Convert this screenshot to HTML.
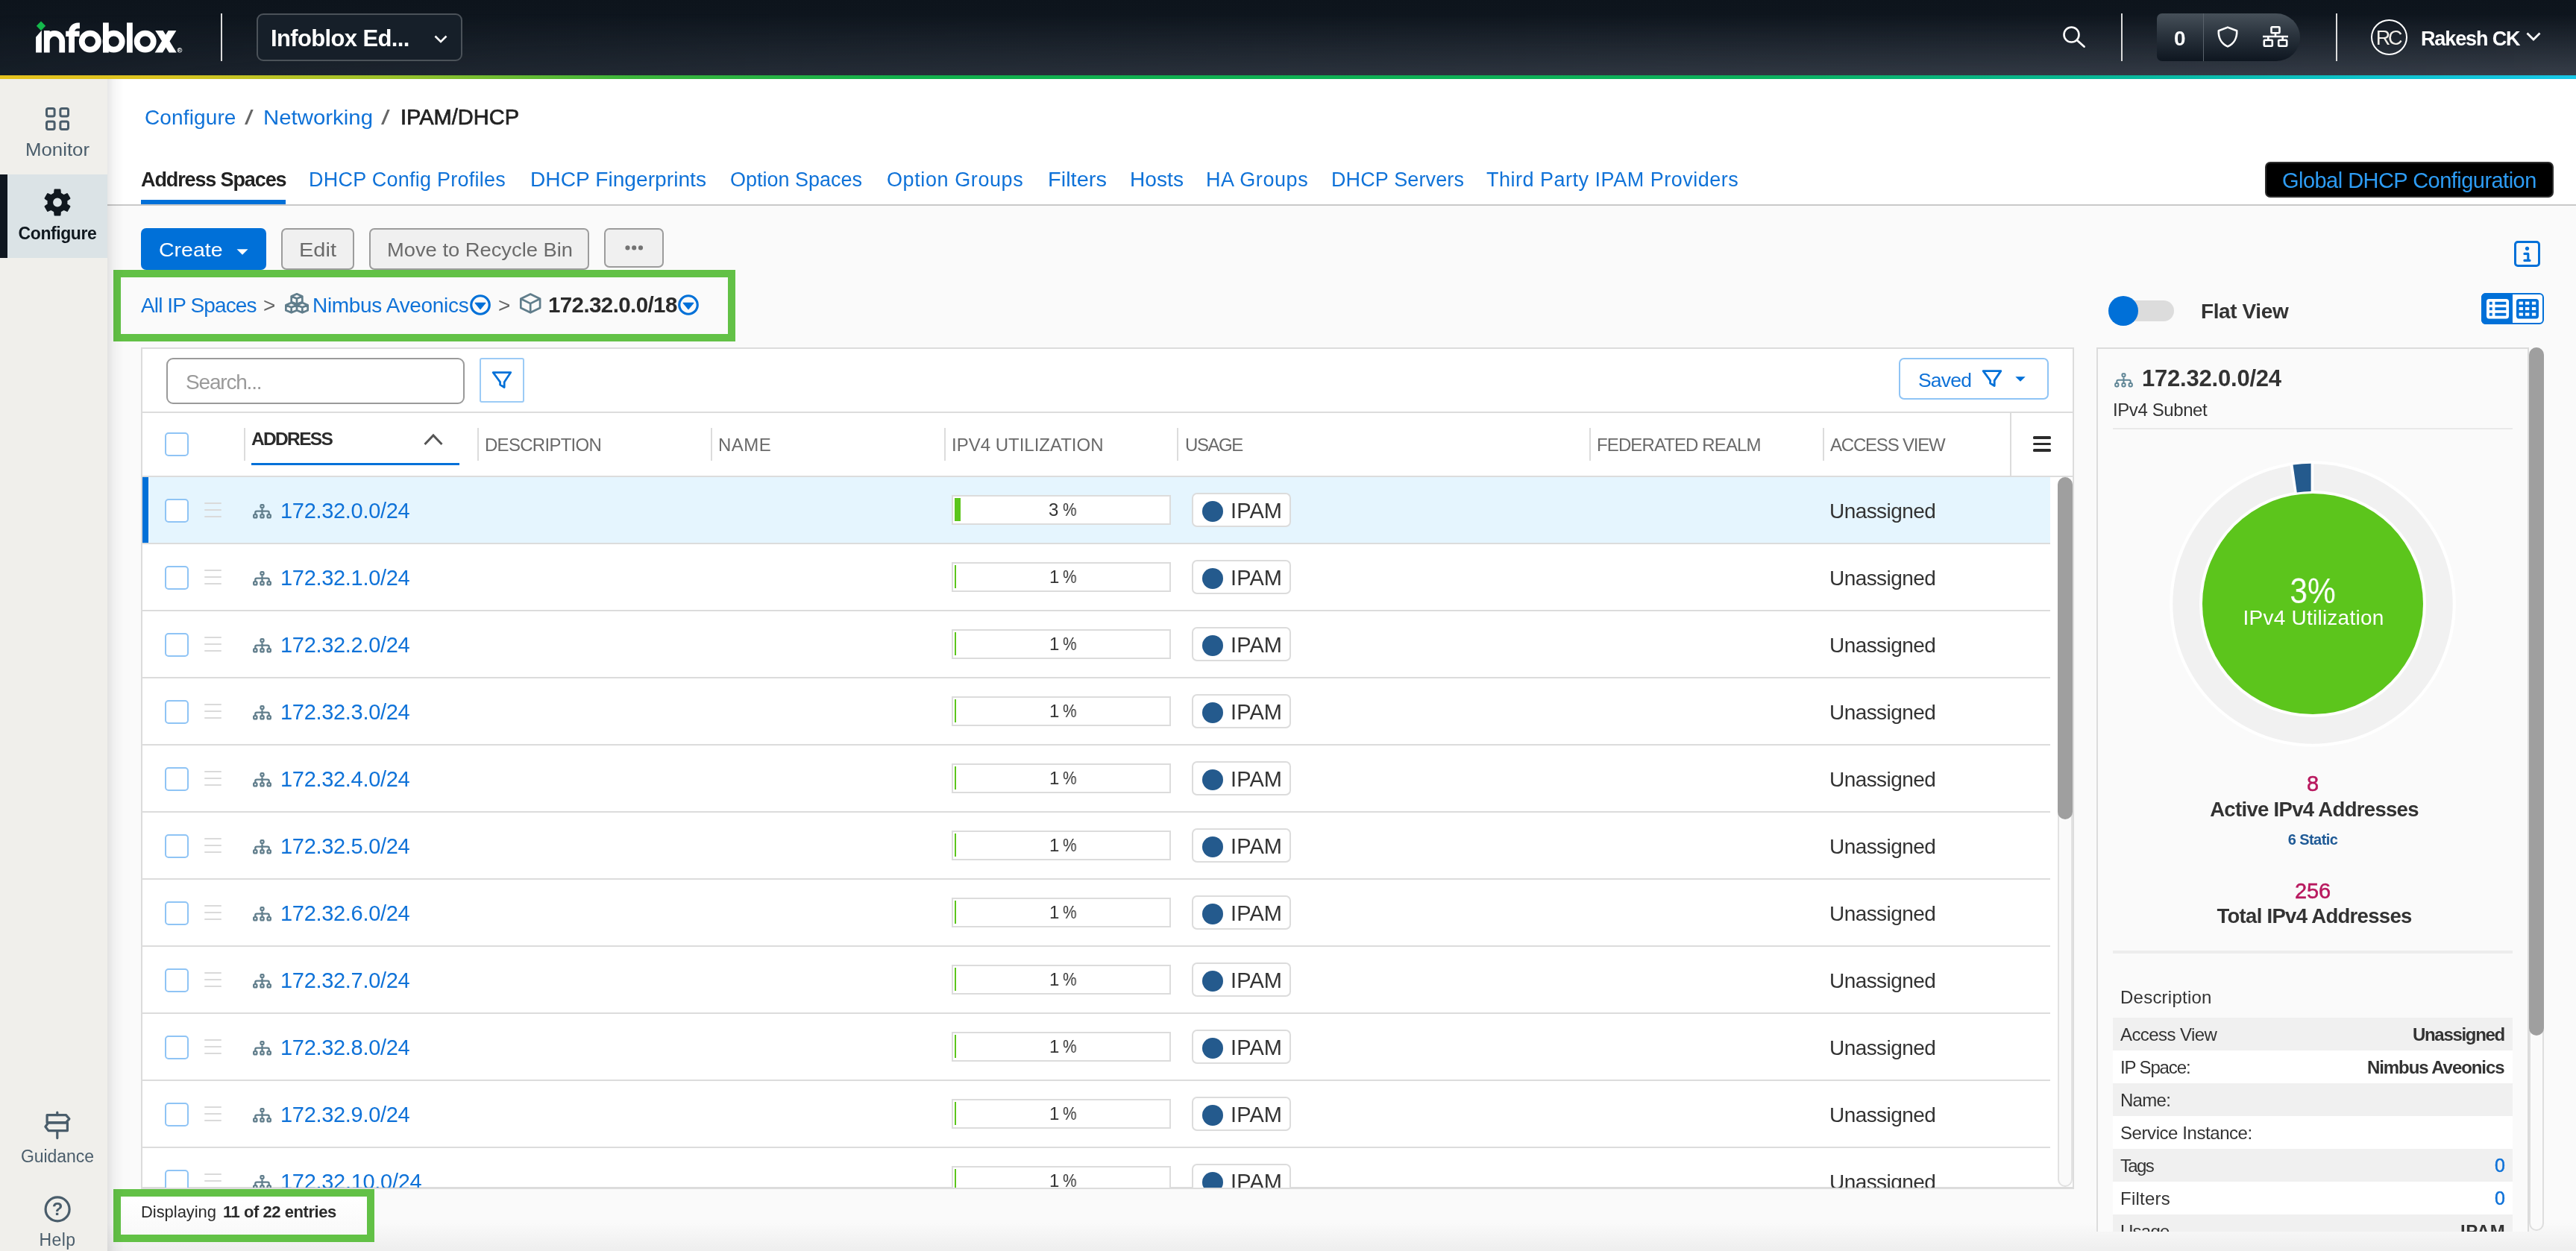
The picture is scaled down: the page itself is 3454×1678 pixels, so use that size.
<!DOCTYPE html>
<html><head><meta charset="utf-8"><title>IPAM/DHCP</title><style>
html,body{margin:0;padding:0;}
body{width:3454px;height:1678px;overflow:hidden;position:relative;background:#fafafa;font-family:"Liberation Sans",sans-serif;}
div,span.t,svg{position:absolute;box-sizing:border-box;}
span.t{white-space:pre;will-change:transform;}
svg{overflow:visible;}
</style></head><body>
<div style="left:144px;top:106px;width:3310px;height:169px;background:#fff;"></div>
<div style="left:144px;top:274px;width:3310px;height:2px;background:#c9c9c9;"></div>
<div style="left:0px;top:0px;width:3454px;height:102px;background:linear-gradient(#0d141c,#121a23);"></div>
<div style="left:0px;top:0px;width:3454px;height:102px;background:linear-gradient(to bottom,rgba(75,82,94,0) 18%,rgba(75,82,94,0.64) 100%);-webkit-mask-image:linear-gradient(to right,rgba(0,0,0,0.12) 0%,rgba(0,0,0,0.5) 30%,rgba(0,0,0,0.8) 65%,#000 100%);mask-image:linear-gradient(to right,rgba(0,0,0,0.12) 0%,rgba(0,0,0,0.5) 30%,rgba(0,0,0,0.8) 65%,#000 100%);"></div>
<div style="left:0px;top:101px;width:3454px;height:5px;background:linear-gradient(90deg,#e6c21e 0%,#dcc420 6%,#9cc22a 15%,#3fb53a 24%,#12b04c 35%,#0cb05c 68%,#08b794 81%,#0ec3cc 92%,#18c8e8 100%);"></div>
<svg style="left:0px;top:0px;" width="260" height="100" viewBox="0 0 260 100"><polygon points="48.1,70.6 48.1,49.8 55.9,40.7 55.9,70.6" fill="#fff"/><polygon points="55,28.6 61.2,34.8 55,41 48.8,34.8" fill="#14b84b"/><path d="M62.8 70.6 V40.9 M62.8 55.1 A10.2 10.2 0 0 1 83.2 55.1 V70.6" stroke="#fff" stroke-width="7.8" fill="none"/><path d="M96.1 70.6 V42.6 A8.3 8.3 0 0 1 104.4 34.3 H106.9" stroke="#fff" stroke-width="7.8" fill="none"/><rect x="88.2" y="41.7" width="18.4" height="7.3" fill="#fff"/><circle cx="120.8" cy="55.65" r="11.05" stroke="#fff" stroke-width="7.8" fill="none"/><path d="M141.9 30.4 V70.6" stroke="#fff" stroke-width="7.8" fill="none"/><circle cx="152.6" cy="55.65" r="11.05" stroke="#fff" stroke-width="7.8" fill="none"/><path d="M173.9 30.4 V70.6" stroke="#fff" stroke-width="7.8" fill="none"/><circle cx="194.7" cy="55.65" r="11.05" stroke="#fff" stroke-width="7.8" fill="none"/><polygon points="208.2,40.9 218.6,40.9 236.7,70.6 226.8,70.6" fill="#fff"/><polygon points="225.6,40.9 236.4,40.9 218.1,70.6 207.6,70.6" fill="#fff"/><circle cx="241" cy="67.3" r="2.9" fill="none" stroke="#fff" stroke-width="0.8"/></svg>
<span id="t1" class="t" style="top:66.00px;font-size:4.5px;line-height:4.5px;color:#fff;font-weight:700;letter-spacing:0.000px;left:239.4px;">R</span>
<div style="left:296px;top:18px;width:2px;height:64px;background:#dcdcdc;"></div>
<div style="left:344px;top:18px;width:276px;height:64px;border:2px solid #4b5259;border-radius:9px;background:#161f29;"></div>
<span id="t2" class="t" style="top:36.00px;font-size:31px;line-height:31px;color:#fff;font-weight:700;letter-spacing:-0.638px;left:363px;">Infoblox Ed...</span>
<svg style="left:582px;top:47px;" width="18" height="11" viewBox="0 0 18 11"><path d="M1.5 1.5 L9 9 L16.5 1.5" fill="none" stroke="#fff" stroke-width="2.6"/></svg>
<svg style="left:2766px;top:35px;" width="30" height="29" viewBox="0 0 30 29"><circle cx="11.5" cy="11.5" r="10" fill="none" stroke="#fff" stroke-width="2.6"/><path d="M19 19 L28.5 27.5" stroke="#fff" stroke-width="2.8" stroke-linecap="round"/></svg>
<div style="left:2844px;top:18px;width:2px;height:64px;background:#dcdcdc;"></div>
<div style="left:2892px;top:18px;width:192px;height:64px;border-radius:7px 32px 32px 7px;background:linear-gradient(#465059,#2a333d 45%,#0e1620);"></div>
<div style="left:2954px;top:18px;width:1px;height:64px;background:#59626b;"></div>
<span id="t3" class="t" style="top:38.00px;font-size:28px;line-height:28px;color:#fff;font-weight:700;letter-spacing:0.000px;left:2914.5px;">0</span>
<svg style="left:2973px;top:35px;" width="28" height="29" viewBox="0 0 28 29"><path d="M14 1.6 L26.2 6.2 C26.6 15 23 23.5 14 27.4 C5 23.5 1.4 15 1.8 6.2 Z" fill="none" stroke="#fff" stroke-width="2.6" stroke-linejoin="round"/></svg>
<svg style="left:3034px;top:35px;" width="34" height="28" viewBox="0 0 34 28"><g fill="none" stroke="#fff" stroke-width="2.6" stroke-linejoin="round"><rect x="11.5" y="1.3" width="11" height="8" rx="1"/><rect x="1.8" y="18.7" width="11" height="8" rx="1"/><rect x="21.2" y="18.7" width="11" height="8" rx="1"/><path d="M0 14 H34 M17 9.3 V14 M7.3 14 V18.7 M26.7 14 V18.7"/></g></svg>
<div style="left:3132px;top:18px;width:2px;height:64px;background:#dcdcdc;"></div>
<div style="left:3179px;top:26px;width:49px;height:48px;border:2px solid #fff;border-radius:50%;"></div>
<span id="t4" class="t" style="top:38.00px;font-size:27px;line-height:27px;color:#f1eee8;font-weight:400;letter-spacing:-3.333px;left:3201.83px;transform:translateX(-50%);">RC</span>
<span id="t5" class="t" style="top:39.00px;font-size:27px;line-height:27px;color:#fff;font-weight:700;letter-spacing:-1.125px;left:3246px;">Rakesh CK</span>
<svg style="left:3387px;top:43px;" width="20" height="12" viewBox="0 0 20 12"><path d="M1.5 1.5 L10 10 L18.5 1.5" fill="none" stroke="#fff" stroke-width="2.8"/></svg>
<div style="left:0px;top:106px;width:144px;height:1572px;background:#f0efeb;"></div>
<svg style="left:61px;top:144px;" width="32" height="31" viewBox="0 0 32 31"><g fill="none" stroke="#4a5d6b" stroke-width="3"><rect x="1.5" y="1.5" width="10.6" height="10.4" rx="2.2"/><rect x="19.9" y="1.5" width="10.6" height="10.4" rx="2.2"/><rect x="1.5" y="19.1" width="10.6" height="10.4" rx="2.2"/><rect x="19.9" y="19.1" width="10.6" height="10.4" rx="2.2"/></g></svg>
<span id="t6" class="t" style="top:190.00px;font-size:23px;line-height:23px;color:#4a5d6b;font-weight:400;letter-spacing:0.000px;left:77.00px;transform:translateX(-50%) scaleX(1.1212);">Monitor</span>
<div style="left:0px;top:234px;width:144px;height:112px;background:#dbe3e6;"></div>
<div style="left:0px;top:234px;width:10px;height:112px;background:#0f1720;"></div>
<svg style="left:59px;top:253px;" width="36" height="37" viewBox="0 0 36 37"><path d="M14.11 6.52 L14.60 1.64 L21.40 1.64 L21.89 6.52 L26.43 9.14 L30.90 7.13 L34.30 13.01 L30.32 15.88 L30.32 21.12 L34.30 23.99 L30.90 29.87 L26.43 27.86 L21.89 30.48 L21.40 35.36 L14.60 35.36 L14.11 30.48 L9.57 27.86 L5.10 29.87 L1.70 23.99 L5.68 21.12 L5.68 15.88 L1.70 13.01 L5.10 7.13 L9.57 9.14 Z M25.00 18.50 A7.0 7.0 0 1 0 11.00 18.50 A7.0 7.0 0 1 0 25.00 18.50 Z" fill="#10181f" fill-rule="evenodd" stroke="#10181f" stroke-width="2.2" stroke-linejoin="round"/></svg>
<span id="t7" class="t" style="top:302.00px;font-size:23px;line-height:23px;color:#10181f;font-weight:700;letter-spacing:-0.425px;left:76.79px;transform:translateX(-50%);">Configure</span>
<svg style="left:58px;top:1491px;" width="37" height="37" viewBox="0 0 37 37"><g fill="none" stroke="#4a5d6b" stroke-width="3.2" stroke-linejoin="round" stroke-linecap="round"><path d="M18.8 1 V4.6 M18.8 25.6 V35.6"/><path d="M5.1 4.6 H30.5 L34.9 9.7 L30.5 14.8 H5.1 Z"/><path d="M32.4 14.8 H7 L2.9 20.2 L7 25.6 H32.4 Z"/></g></svg>
<span id="t8" class="t" style="top:1540.00px;font-size:23px;line-height:23px;color:#4a5d6b;font-weight:400;letter-spacing:-0.062px;left:76.97px;transform:translateX(-50%);">Guidance</span>
<svg style="left:59px;top:1603.5px;" width="36" height="36" viewBox="0 0 36 36"><circle cx="18.1" cy="17.9" r="16" fill="none" stroke="#4a5d6b" stroke-width="3.2"/></svg>
<span id="t9" class="t" style="top:1610.00px;font-size:24px;line-height:24px;color:#4a5d6b;font-weight:700;letter-spacing:0.000px;left:77.00px;transform:translateX(-50%);">?</span>
<span id="t10" class="t" style="top:1652.00px;font-size:23px;line-height:23px;color:#4a5d6b;font-weight:400;letter-spacing:0.482px;left:77.24px;transform:translateX(-50%);">Help</span>
<span id="t11" class="t" style="top:144.00px;font-size:28px;line-height:28px;color:#0f72d8;font-weight:400;letter-spacing:0.129px;left:194px;">Configure</span>
<span id="t12" class="t" style="top:144.00px;font-size:28px;line-height:28px;color:#666;font-weight:400;letter-spacing:0.000px;left:327.5px;transform:scaleX(1.5);transform-origin:left;">/</span>
<span id="t13" class="t" style="top:144.00px;font-size:28px;line-height:28px;color:#0f72d8;font-weight:400;letter-spacing:0.000px;left:353px;transform:scaleX(1.0495);transform-origin:left center;">Networking</span>
<span id="t14" class="t" style="top:144.00px;font-size:28px;line-height:28px;color:#666;font-weight:400;letter-spacing:0.000px;left:511px;transform:scaleX(1.5);transform-origin:left;">/</span>
<span id="t15" class="t" style="top:143.00px;font-size:29px;line-height:29px;color:#222;font-weight:400;letter-spacing:0.002px;-webkit-text-stroke:0.7px #222;left:536.5px;">IPAM/DHCP</span>
<span id="t16" class="t" style="top:228.00px;font-size:27px;line-height:27px;color:#222;font-weight:700;letter-spacing:-1.119px;left:188.5px;">Address Spaces</span>
<div style="left:189px;top:268px;width:194px;height:6px;background:#0070d8;"></div>
<span id="t17" class="t" style="top:228.00px;font-size:27px;line-height:27px;color:#0f72d8;font-weight:400;letter-spacing:0.251px;left:413.5px;">DHCP Config Profiles</span>
<span id="t18" class="t" style="top:228.00px;font-size:27px;line-height:27px;color:#0f72d8;font-weight:400;letter-spacing:0.000px;left:710.5px;transform:scaleX(1.0439);transform-origin:left center;">DHCP Fingerprints</span>
<span id="t19" class="t" style="top:228.00px;font-size:27px;line-height:27px;color:#0f72d8;font-weight:400;letter-spacing:-0.009px;left:978.5px;">Option Spaces</span>
<span id="t20" class="t" style="top:228.00px;font-size:27px;line-height:27px;color:#0f72d8;font-weight:400;letter-spacing:0.593px;left:1188.5px;">Option Groups</span>
<span id="t21" class="t" style="top:228.00px;font-size:27px;line-height:27px;color:#0f72d8;font-weight:400;letter-spacing:0.000px;left:1404.5px;transform:scaleX(1.0748);transform-origin:left center;">Filters</span>
<span id="t22" class="t" style="top:228.00px;font-size:27px;line-height:27px;color:#0f72d8;font-weight:400;letter-spacing:0.000px;left:1514.5px;transform:scaleX(1.0430);transform-origin:left center;">Hosts</span>
<span id="t23" class="t" style="top:228.00px;font-size:27px;line-height:27px;color:#0f72d8;font-weight:400;letter-spacing:0.581px;left:1616.5px;">HA Groups</span>
<span id="t24" class="t" style="top:228.00px;font-size:27px;line-height:27px;color:#0f72d8;font-weight:400;letter-spacing:0.126px;left:1784.5px;">DHCP Servers</span>
<span id="t25" class="t" style="top:228.00px;font-size:27px;line-height:27px;color:#0f72d8;font-weight:400;letter-spacing:0.506px;left:1992.5px;">Third Party IPAM Providers</span>
<div style="left:3037px;top:217px;width:387px;height:48px;background:#000;border:2px solid #2e2e2e;border-radius:7px;"></div>
<span id="t26" class="t" style="top:228.00px;font-size:29px;line-height:29px;color:#2d9cf4;font-weight:400;letter-spacing:-0.534px;left:3060px;">Global DHCP Configuration</span>
<div style="left:189px;top:306px;width:168px;height:56px;background:#0070d8;border-radius:7px;"></div>
<span id="t27" class="t" style="top:322.00px;font-size:26px;line-height:26px;color:#fff;font-weight:400;letter-spacing:0.000px;left:212.5px;transform:scaleX(1.0955);transform-origin:left center;">Create</span>
<svg style="left:317px;top:333.5px;" width="16" height="8" viewBox="0 0 16 8"><path d="M0.5 0.3 H15.5 L8 7.8 Z" fill="#fff"/></svg>
<div style="left:377px;top:306px;width:98px;height:56px;background:#f0f0f0;border:2px solid #9c9c9c;border-radius:7px;"></div>
<span id="t28" class="t" style="top:322.00px;font-size:26px;line-height:26px;color:#6b6b6b;font-weight:400;letter-spacing:0.000px;left:401px;transform:scaleX(1.1158);transform-origin:left center;">Edit</span>
<div style="left:495px;top:306px;width:295px;height:56px;background:#f0f0f0;border:2px solid #9c9c9c;border-radius:7px;"></div>
<span id="t29" class="t" style="top:322.00px;font-size:26px;line-height:26px;color:#6b6b6b;font-weight:400;letter-spacing:0.000px;left:519px;transform:scaleX(1.0507);transform-origin:left center;">Move to Recycle Bin</span>
<div style="left:810px;top:306px;width:80px;height:53px;background:#f0f0f0;border:2px solid #9c9c9c;border-radius:7px;"></div>
<svg style="left:835px;top:326px;" width="30" height="13" viewBox="0 0 30 13"><g fill="#737373"><circle cx="6.5" cy="6.4" r="3.05"/><circle cx="15.2" cy="6.4" r="3.05"/><circle cx="24" cy="6.4" r="3.05"/></g></svg>
<div style="left:3371.3px;top:323.4px;width:34.6px;height:35px;border:3.6px solid #0070d8;border-radius:5px;"></div>
<svg style="left:3380px;top:329px;" width="18" height="24" viewBox="0 0 18 24"><circle cx="8.5" cy="4.3" r="2.6" fill="#0070d8"/><path d="M4.9 11.4 H9.8 V20.4 M4.9 20.4 H12" fill="none" stroke="#0070d8" stroke-width="3.1" stroke-linecap="round" stroke-linejoin="round"/></svg>
<div style="left:152px;top:362px;width:834px;height:96px;border:10px solid #62c146;"></div>
<span id="t30" class="t" style="top:396.00px;font-size:28px;line-height:28px;color:#0f72d8;font-weight:400;letter-spacing:-0.882px;left:189px;">All IP Spaces</span>
<span id="t31" class="t" style="top:396.00px;font-size:28px;line-height:28px;color:#666;font-weight:400;letter-spacing:0.000px;left:353px;">&gt;</span>
<svg style="left:380px;top:390px;" width="36" height="32" viewBox="380 390 36 32"><path d="M398.00 394.25 L405.33 397.40 L405.33 404.90 L398.00 408.05 L390.67 404.90 L390.67 397.40 Z M390.67 397.40 L398.00 400.55 L405.33 397.40 M398.00 400.55 L398.00 408.05 M390.67 406.05 L398.00 409.20 L398.00 416.20 L390.67 419.35 L383.34 416.20 L383.34 409.20 Z M383.34 409.20 L390.67 412.35 L398.00 409.20 M390.67 412.35 L390.67 419.35 M405.33 406.05 L412.66 409.20 L412.66 416.20 L405.33 419.35 L398.00 416.20 L398.00 409.20 Z M398.00 409.20 L405.33 412.35 L412.66 409.20 M405.33 412.35 L405.33 419.35" fill="none" stroke="#607d8b" stroke-width="2.7" stroke-linejoin="round"/></svg>
<span id="t32" class="t" style="top:396.00px;font-size:28px;line-height:28px;color:#0f72d8;font-weight:400;letter-spacing:-0.329px;left:419px;">Nimbus Aveonics</span>
<svg style="left:629.5px;top:394.7px;" width="28" height="28" viewBox="0 0 28 28"><circle cx="14" cy="14" r="12.25" fill="none" stroke="#0070d8" stroke-width="3.2"/><path d="M7.2 11.4 H20.8 L14 19.6 Z" fill="#0070d8" stroke="#0070d8" stroke-width="1.2" stroke-linejoin="round"/></svg>
<span id="t33" class="t" style="top:396.00px;font-size:28px;line-height:28px;color:#666;font-weight:400;letter-spacing:0.000px;left:668px;">&gt;</span>
<svg style="left:694px;top:390px;" width="36" height="34" viewBox="694 390 36 34"><path d="M711.20 394.50 L724.10 400.80 L724.10 413.00 L711.20 419.30 L698.30 413.00 L698.30 400.80 Z M698.30 400.80 L711.20 407.10 L724.10 400.80 M711.20 407.10 L711.20 419.30" fill="none" stroke="#607d8b" stroke-width="2.7" stroke-linejoin="round"/></svg>
<span id="t34" class="t" style="top:394.00px;font-size:29.5px;line-height:29.5px;color:#2a2a2a;font-weight:700;letter-spacing:-0.596px;left:735px;">172.32.0.0/18</span>
<svg style="left:909.2px;top:394.8px;" width="28" height="28" viewBox="0 0 28 28"><circle cx="14" cy="14" r="12.25" fill="none" stroke="#0070d8" stroke-width="3.2"/><path d="M7.2 11.4 H20.8 L14 19.6 Z" fill="#0070d8" stroke="#0070d8" stroke-width="1.2" stroke-linejoin="round"/></svg>
<div style="left:2846px;top:403px;width:69px;height:28px;background:#dcdcdc;border-radius:14px;"></div>
<div style="left:2826.8px;top:396.9px;width:40.3px;height:40.3px;background:#0070d8;border-radius:50%;"></div>
<span id="t35" class="t" style="top:404.00px;font-size:28px;line-height:28px;color:#333;font-weight:700;letter-spacing:-0.395px;left:2950.5px;">Flat View</span>
<div style="left:3327px;top:392.9px;width:84px;height:42.2px;border:2.4px solid #0070d8;border-radius:6px;background:#fff;"></div>
<div style="left:3327px;top:392.9px;width:42px;height:42.2px;background:#0070d8;border-radius:6px 0 0 6px;"></div>
<svg style="left:3333.9px;top:400.5px;" width="30" height="26.4" viewBox="0 0 30 26.4"><rect x="0" y="0" width="30" height="26.4" rx="3.6" fill="#fff"/><rect x="3.9" y="3.8" width="3.8" height="3.85" fill="#0070d8"/><rect x="11.4" y="3.8" width="14.9" height="3.85" fill="#0070d8"/><rect x="3.9" y="11.25" width="3.8" height="3.85" fill="#0070d8"/><rect x="11.4" y="11.25" width="14.9" height="3.85" fill="#0070d8"/><rect x="3.9" y="18.8" width="3.8" height="3.85" fill="#0070d8"/><rect x="11.4" y="18.8" width="14.9" height="3.85" fill="#0070d8"/></svg>
<svg style="left:3374.1px;top:400.5px;" width="30" height="26.4" viewBox="0 0 30 26.4"><rect x="0" y="0" width="30" height="26.4" rx="3.6" fill="#0070d8"/><rect x="3.6" y="3.6" width="5.3" height="4" fill="#fff"/><rect x="12.0" y="3.6" width="5.3" height="4" fill="#fff"/><rect x="20.9" y="3.6" width="5.3" height="4" fill="#fff"/><rect x="3.6" y="11.0" width="5.3" height="4" fill="#fff"/><rect x="12.0" y="11.0" width="5.3" height="4" fill="#fff"/><rect x="20.9" y="11.0" width="5.3" height="4" fill="#fff"/><rect x="3.6" y="18.6" width="5.3" height="4" fill="#fff"/><rect x="12.0" y="18.6" width="5.3" height="4" fill="#fff"/><rect x="20.9" y="18.6" width="5.3" height="4" fill="#fff"/></svg>
<div style="left:189px;top:466px;width:2592px;height:1128px;background:#fff;border:2px solid #dcdcdc;"></div>
<div style="left:223px;top:480px;width:400px;height:62px;border:2px solid #9a9a9a;border-radius:9px;background:#fff;"></div>
<span id="t36" class="t" style="top:499.00px;font-size:28px;line-height:28px;color:#9a9a9a;font-weight:400;letter-spacing:-1.184px;left:249px;">Search...</span>
<div style="left:643px;top:480px;width:60px;height:60px;border:2px solid #9ccbf6;border-radius:3px;background:#fff;"></div>
<svg style="left:659px;top:497px;" width="28" height="25" viewBox="0 0 28 25"><path d="M2.2 2.6 H25.8 L17.2 15.4 V22.6 L11.6 19 V15.4 Z" fill="none" stroke="#0070d8" stroke-width="2.7" stroke-linejoin="round"/></svg>
<div style="left:2546px;top:480px;width:201px;height:56px;border:2px solid #8fc4f5;border-radius:7px;background:#fff;"></div>
<span id="t37" class="t" style="top:497.00px;font-size:26.5px;line-height:26.5px;color:#0f72d8;font-weight:400;letter-spacing:-0.809px;left:2571.5px;">Saved</span>
<svg style="left:2656.5px;top:495px;" width="28" height="25" viewBox="0 0 28 25"><path d="M2.2 2.6 H25.8 L17.2 15.4 V22.6 L11.6 19 V15.4 Z" fill="none" stroke="#0070d8" stroke-width="2.8" stroke-linejoin="round"/></svg>
<svg style="left:2701.5px;top:504.5px;" width="14" height="7" viewBox="0 0 14 7"><path d="M0.3 0.2 H13.7 L7 6.8 Z" fill="#0070d8"/></svg>
<div style="left:191px;top:552px;width:2588px;height:2px;background:#dcdcdc;"></div>
<div style="left:221px;top:580px;width:32px;height:32px;border:2px solid #8fc4f5;border-radius:5px;background:#fff;"></div>
<div style="left:327px;top:574px;width:2px;height:44px;background:#dcdcdc;"></div>
<div style="left:640px;top:574px;width:2px;height:44px;background:#dcdcdc;"></div>
<div style="left:953px;top:574px;width:2px;height:44px;background:#dcdcdc;"></div>
<div style="left:1265.5px;top:574px;width:2px;height:44px;background:#dcdcdc;"></div>
<div style="left:1578px;top:574px;width:2px;height:44px;background:#dcdcdc;"></div>
<div style="left:2131px;top:574px;width:2px;height:44px;background:#dcdcdc;"></div>
<div style="left:2444px;top:574px;width:2px;height:44px;background:#dcdcdc;"></div>
<span id="t38" class="t" style="top:577.00px;font-size:24.5px;line-height:24.5px;color:#2b2b2b;font-weight:700;letter-spacing:-1.661px;left:337px;">ADDRESS</span>
<svg style="left:568px;top:580.5px;" width="26" height="17" viewBox="0 0 26 17"><path d="M1.5 15 L13 3 L24.5 15" fill="none" stroke="#555" stroke-width="3"/></svg>
<div style="left:337px;top:621px;width:279px;height:3px;background:#0070d8;"></div>
<span id="t39" class="t" style="top:585.00px;font-size:24px;line-height:24px;color:#6a6a6a;font-weight:400;letter-spacing:-0.716px;left:650px;">DESCRIPTION</span>
<span id="t40" class="t" style="top:585.00px;font-size:24px;line-height:24px;color:#6a6a6a;font-weight:400;letter-spacing:0.473px;left:963px;">NAME</span>
<span id="t41" class="t" style="top:585.00px;font-size:24px;line-height:24px;color:#6a6a6a;font-weight:400;letter-spacing:-0.006px;left:1275.5px;">IPV4 UTILIZATION</span>
<span id="t42" class="t" style="top:585.00px;font-size:24px;line-height:24px;color:#6a6a6a;font-weight:400;letter-spacing:-1.451px;left:1588.5px;">USAGE</span>
<span id="t43" class="t" style="top:585.00px;font-size:24px;line-height:24px;color:#6a6a6a;font-weight:400;letter-spacing:-0.891px;left:2141px;">FEDERATED REALM</span>
<span id="t44" class="t" style="top:585.00px;font-size:24px;line-height:24px;color:#6a6a6a;font-weight:400;letter-spacing:-1.210px;left:2454px;">ACCESS VIEW</span>
<div style="left:2695px;top:553px;width:2px;height:86px;background:#dcdcdc;"></div>
<div style="left:2726px;top:585.2px;width:24px;height:3.5px;background:#2b2b2b;border-radius:1.5px;"></div>
<div style="left:2726px;top:593.75px;width:24px;height:3.5px;background:#2b2b2b;border-radius:1.5px;"></div>
<div style="left:2726px;top:602.3000000000001px;width:24px;height:3.5px;background:#2b2b2b;border-radius:1.5px;"></div>
<div style="left:191px;top:638px;width:2588px;height:2px;background:#dcdcdc;"></div>
<div style="left:191px;top:640px;width:2558px;height:88px;background:#e5f5fe;"></div>
<div style="left:191px;top:640px;width:8px;height:88px;background:#0070d8;"></div>
<div style="left:191px;top:728px;width:2558px;height:2px;background:#dcdcdc;"></div>
<div style="left:221px;top:668.5px;width:32px;height:32px;border:2px solid #8fc4f5;border-radius:5px;background:#fff;"></div>
<div style="left:273.5px;top:674.1px;width:23.5px;height:2.4px;background:#dadada;border-radius:1.2px;"></div>
<div style="left:273.5px;top:682.8000000000001px;width:23.5px;height:2.4px;background:#dadada;border-radius:1.2px;"></div>
<div style="left:273.5px;top:691.5px;width:23.5px;height:2.4px;background:#dadada;border-radius:1.2px;"></div>
<svg style="left:338.9px;top:676.2px;" width="25" height="19.6" viewBox="0 0 25 19.6"><g fill="none" stroke="#607d8b" stroke-width="2.3" stroke-linejoin="round"><rect x="10.45" y="1.15" width="4.1" height="4.0" rx="1.3"/><rect x="1.15" y="14.1" width="4.3" height="4.3" rx="1.4"/><rect x="10.35" y="14.1" width="4.3" height="4.3" rx="1.4"/><rect x="19.55" y="14.1" width="4.3" height="4.3" rx="1.4"/><path d="M12.5 6.3 V12.9 M3.3 12.9 V11.6 Q3.3 9.7 5.2 9.7 H19.8 Q21.7 9.7 21.7 11.6 V12.9"/></g></svg>
<span id="t45" class="t" style="top:671.00px;font-size:29px;line-height:29px;color:#0f72d8;font-weight:400;letter-spacing:-0.311px;left:375.5px;">172.32.0.0/24</span>
<div style="left:1276px;top:663.5px;width:294px;height:40px;border:2px solid #dcdcdc;background:#fff;"></div>
<div style="left:1280px;top:667.5px;width:7.8px;height:31.5px;background:#5cc51c;"></div>
<span id="t46" class="t" style="top:672.00px;font-size:24px;line-height:24px;color:#333;font-weight:400;letter-spacing:0.000px;left:1406px;">3</span>
<span id="t47" class="t" style="top:672.00px;font-size:24px;line-height:24px;color:#333;font-weight:400;letter-spacing:0.000px;left:1424.8px;transform:scaleX(0.87);transform-origin:left;">%</span>
<div style="left:1598px;top:661px;width:132.5px;height:45.5px;border:2px solid #dcdcdc;border-radius:7px;background:#fff;"></div>
<div style="left:1612px;top:671.5px;width:28px;height:28px;background:#245a8d;border-radius:50%;"></div>
<span id="t48" class="t" style="top:671.00px;font-size:29px;line-height:29px;color:#333;font-weight:400;letter-spacing:0.071px;left:1650px;">IPAM</span>
<span id="t49" class="t" style="top:672.00px;font-size:28px;line-height:28px;color:#333;font-weight:400;letter-spacing:-0.566px;left:2452.5px;">Unassigned</span>
<div style="left:191px;top:818px;width:2558px;height:2px;background:#dcdcdc;"></div>
<div style="left:221px;top:758.5px;width:32px;height:32px;border:2px solid #8fc4f5;border-radius:5px;background:#fff;"></div>
<div style="left:273.5px;top:764.1px;width:23.5px;height:2.4px;background:#dadada;border-radius:1.2px;"></div>
<div style="left:273.5px;top:772.8000000000001px;width:23.5px;height:2.4px;background:#dadada;border-radius:1.2px;"></div>
<div style="left:273.5px;top:781.5px;width:23.5px;height:2.4px;background:#dadada;border-radius:1.2px;"></div>
<svg style="left:338.9px;top:766.2px;" width="25" height="19.6" viewBox="0 0 25 19.6"><g fill="none" stroke="#607d8b" stroke-width="2.3" stroke-linejoin="round"><rect x="10.45" y="1.15" width="4.1" height="4.0" rx="1.3"/><rect x="1.15" y="14.1" width="4.3" height="4.3" rx="1.4"/><rect x="10.35" y="14.1" width="4.3" height="4.3" rx="1.4"/><rect x="19.55" y="14.1" width="4.3" height="4.3" rx="1.4"/><path d="M12.5 6.3 V12.9 M3.3 12.9 V11.6 Q3.3 9.7 5.2 9.7 H19.8 Q21.7 9.7 21.7 11.6 V12.9"/></g></svg>
<span id="t50" class="t" style="top:761.00px;font-size:29px;line-height:29px;color:#0f72d8;font-weight:400;letter-spacing:-0.311px;left:375.5px;">172.32.1.0/24</span>
<div style="left:1276px;top:753.5px;width:294px;height:40px;border:2px solid #dcdcdc;background:#fff;"></div>
<div style="left:1280px;top:757.5px;width:2.2px;height:31.5px;background:#5cc51c;"></div>
<span id="t51" class="t" style="top:762.00px;font-size:24px;line-height:24px;color:#333;font-weight:400;letter-spacing:0.000px;left:1406.8px;">1</span>
<span id="t52" class="t" style="top:762.00px;font-size:24px;line-height:24px;color:#333;font-weight:400;letter-spacing:0.000px;left:1424.8px;transform:scaleX(0.87);transform-origin:left;">%</span>
<div style="left:1598px;top:751px;width:132.5px;height:45.5px;border:2px solid #dcdcdc;border-radius:7px;background:#fff;"></div>
<div style="left:1612px;top:761.5px;width:28px;height:28px;background:#245a8d;border-radius:50%;"></div>
<span id="t53" class="t" style="top:761.00px;font-size:29px;line-height:29px;color:#333;font-weight:400;letter-spacing:0.071px;left:1650px;">IPAM</span>
<span id="t54" class="t" style="top:762.00px;font-size:28px;line-height:28px;color:#333;font-weight:400;letter-spacing:-0.566px;left:2452.5px;">Unassigned</span>
<div style="left:191px;top:908px;width:2558px;height:2px;background:#dcdcdc;"></div>
<div style="left:221px;top:848.5px;width:32px;height:32px;border:2px solid #8fc4f5;border-radius:5px;background:#fff;"></div>
<div style="left:273.5px;top:854.1px;width:23.5px;height:2.4px;background:#dadada;border-radius:1.2px;"></div>
<div style="left:273.5px;top:862.8000000000001px;width:23.5px;height:2.4px;background:#dadada;border-radius:1.2px;"></div>
<div style="left:273.5px;top:871.5px;width:23.5px;height:2.4px;background:#dadada;border-radius:1.2px;"></div>
<svg style="left:338.9px;top:856.2px;" width="25" height="19.6" viewBox="0 0 25 19.6"><g fill="none" stroke="#607d8b" stroke-width="2.3" stroke-linejoin="round"><rect x="10.45" y="1.15" width="4.1" height="4.0" rx="1.3"/><rect x="1.15" y="14.1" width="4.3" height="4.3" rx="1.4"/><rect x="10.35" y="14.1" width="4.3" height="4.3" rx="1.4"/><rect x="19.55" y="14.1" width="4.3" height="4.3" rx="1.4"/><path d="M12.5 6.3 V12.9 M3.3 12.9 V11.6 Q3.3 9.7 5.2 9.7 H19.8 Q21.7 9.7 21.7 11.6 V12.9"/></g></svg>
<span id="t55" class="t" style="top:851.00px;font-size:29px;line-height:29px;color:#0f72d8;font-weight:400;letter-spacing:-0.311px;left:375.5px;">172.32.2.0/24</span>
<div style="left:1276px;top:843.5px;width:294px;height:40px;border:2px solid #dcdcdc;background:#fff;"></div>
<div style="left:1280px;top:847.5px;width:2.2px;height:31.5px;background:#5cc51c;"></div>
<span id="t56" class="t" style="top:852.00px;font-size:24px;line-height:24px;color:#333;font-weight:400;letter-spacing:0.000px;left:1406.8px;">1</span>
<span id="t57" class="t" style="top:852.00px;font-size:24px;line-height:24px;color:#333;font-weight:400;letter-spacing:0.000px;left:1424.8px;transform:scaleX(0.87);transform-origin:left;">%</span>
<div style="left:1598px;top:841px;width:132.5px;height:45.5px;border:2px solid #dcdcdc;border-radius:7px;background:#fff;"></div>
<div style="left:1612px;top:851.5px;width:28px;height:28px;background:#245a8d;border-radius:50%;"></div>
<span id="t58" class="t" style="top:851.00px;font-size:29px;line-height:29px;color:#333;font-weight:400;letter-spacing:0.071px;left:1650px;">IPAM</span>
<span id="t59" class="t" style="top:852.00px;font-size:28px;line-height:28px;color:#333;font-weight:400;letter-spacing:-0.566px;left:2452.5px;">Unassigned</span>
<div style="left:191px;top:998px;width:2558px;height:2px;background:#dcdcdc;"></div>
<div style="left:221px;top:938.5px;width:32px;height:32px;border:2px solid #8fc4f5;border-radius:5px;background:#fff;"></div>
<div style="left:273.5px;top:944.1px;width:23.5px;height:2.4px;background:#dadada;border-radius:1.2px;"></div>
<div style="left:273.5px;top:952.8000000000001px;width:23.5px;height:2.4px;background:#dadada;border-radius:1.2px;"></div>
<div style="left:273.5px;top:961.5px;width:23.5px;height:2.4px;background:#dadada;border-radius:1.2px;"></div>
<svg style="left:338.9px;top:946.2px;" width="25" height="19.6" viewBox="0 0 25 19.6"><g fill="none" stroke="#607d8b" stroke-width="2.3" stroke-linejoin="round"><rect x="10.45" y="1.15" width="4.1" height="4.0" rx="1.3"/><rect x="1.15" y="14.1" width="4.3" height="4.3" rx="1.4"/><rect x="10.35" y="14.1" width="4.3" height="4.3" rx="1.4"/><rect x="19.55" y="14.1" width="4.3" height="4.3" rx="1.4"/><path d="M12.5 6.3 V12.9 M3.3 12.9 V11.6 Q3.3 9.7 5.2 9.7 H19.8 Q21.7 9.7 21.7 11.6 V12.9"/></g></svg>
<span id="t60" class="t" style="top:941.00px;font-size:29px;line-height:29px;color:#0f72d8;font-weight:400;letter-spacing:-0.311px;left:375.5px;">172.32.3.0/24</span>
<div style="left:1276px;top:933.5px;width:294px;height:40px;border:2px solid #dcdcdc;background:#fff;"></div>
<div style="left:1280px;top:937.5px;width:2.2px;height:31.5px;background:#5cc51c;"></div>
<span id="t61" class="t" style="top:942.00px;font-size:24px;line-height:24px;color:#333;font-weight:400;letter-spacing:0.000px;left:1406.8px;">1</span>
<span id="t62" class="t" style="top:942.00px;font-size:24px;line-height:24px;color:#333;font-weight:400;letter-spacing:0.000px;left:1424.8px;transform:scaleX(0.87);transform-origin:left;">%</span>
<div style="left:1598px;top:931px;width:132.5px;height:45.5px;border:2px solid #dcdcdc;border-radius:7px;background:#fff;"></div>
<div style="left:1612px;top:941.5px;width:28px;height:28px;background:#245a8d;border-radius:50%;"></div>
<span id="t63" class="t" style="top:941.00px;font-size:29px;line-height:29px;color:#333;font-weight:400;letter-spacing:0.071px;left:1650px;">IPAM</span>
<span id="t64" class="t" style="top:942.00px;font-size:28px;line-height:28px;color:#333;font-weight:400;letter-spacing:-0.566px;left:2452.5px;">Unassigned</span>
<div style="left:191px;top:1088px;width:2558px;height:2px;background:#dcdcdc;"></div>
<div style="left:221px;top:1028.5px;width:32px;height:32px;border:2px solid #8fc4f5;border-radius:5px;background:#fff;"></div>
<div style="left:273.5px;top:1034.1px;width:23.5px;height:2.4px;background:#dadada;border-radius:1.2px;"></div>
<div style="left:273.5px;top:1042.8px;width:23.5px;height:2.4px;background:#dadada;border-radius:1.2px;"></div>
<div style="left:273.5px;top:1051.5px;width:23.5px;height:2.4px;background:#dadada;border-radius:1.2px;"></div>
<svg style="left:338.9px;top:1036.2px;" width="25" height="19.6" viewBox="0 0 25 19.6"><g fill="none" stroke="#607d8b" stroke-width="2.3" stroke-linejoin="round"><rect x="10.45" y="1.15" width="4.1" height="4.0" rx="1.3"/><rect x="1.15" y="14.1" width="4.3" height="4.3" rx="1.4"/><rect x="10.35" y="14.1" width="4.3" height="4.3" rx="1.4"/><rect x="19.55" y="14.1" width="4.3" height="4.3" rx="1.4"/><path d="M12.5 6.3 V12.9 M3.3 12.9 V11.6 Q3.3 9.7 5.2 9.7 H19.8 Q21.7 9.7 21.7 11.6 V12.9"/></g></svg>
<span id="t65" class="t" style="top:1031.00px;font-size:29px;line-height:29px;color:#0f72d8;font-weight:400;letter-spacing:-0.311px;left:375.5px;">172.32.4.0/24</span>
<div style="left:1276px;top:1023.5px;width:294px;height:40px;border:2px solid #dcdcdc;background:#fff;"></div>
<div style="left:1280px;top:1027.5px;width:2.2px;height:31.5px;background:#5cc51c;"></div>
<span id="t66" class="t" style="top:1032.00px;font-size:24px;line-height:24px;color:#333;font-weight:400;letter-spacing:0.000px;left:1406.8px;">1</span>
<span id="t67" class="t" style="top:1032.00px;font-size:24px;line-height:24px;color:#333;font-weight:400;letter-spacing:0.000px;left:1424.8px;transform:scaleX(0.87);transform-origin:left;">%</span>
<div style="left:1598px;top:1021px;width:132.5px;height:45.5px;border:2px solid #dcdcdc;border-radius:7px;background:#fff;"></div>
<div style="left:1612px;top:1031.5px;width:28px;height:28px;background:#245a8d;border-radius:50%;"></div>
<span id="t68" class="t" style="top:1031.00px;font-size:29px;line-height:29px;color:#333;font-weight:400;letter-spacing:0.071px;left:1650px;">IPAM</span>
<span id="t69" class="t" style="top:1032.00px;font-size:28px;line-height:28px;color:#333;font-weight:400;letter-spacing:-0.566px;left:2452.5px;">Unassigned</span>
<div style="left:191px;top:1178px;width:2558px;height:2px;background:#dcdcdc;"></div>
<div style="left:221px;top:1118.5px;width:32px;height:32px;border:2px solid #8fc4f5;border-radius:5px;background:#fff;"></div>
<div style="left:273.5px;top:1124.1px;width:23.5px;height:2.4px;background:#dadada;border-radius:1.2px;"></div>
<div style="left:273.5px;top:1132.8px;width:23.5px;height:2.4px;background:#dadada;border-radius:1.2px;"></div>
<div style="left:273.5px;top:1141.5px;width:23.5px;height:2.4px;background:#dadada;border-radius:1.2px;"></div>
<svg style="left:338.9px;top:1126.2px;" width="25" height="19.6" viewBox="0 0 25 19.6"><g fill="none" stroke="#607d8b" stroke-width="2.3" stroke-linejoin="round"><rect x="10.45" y="1.15" width="4.1" height="4.0" rx="1.3"/><rect x="1.15" y="14.1" width="4.3" height="4.3" rx="1.4"/><rect x="10.35" y="14.1" width="4.3" height="4.3" rx="1.4"/><rect x="19.55" y="14.1" width="4.3" height="4.3" rx="1.4"/><path d="M12.5 6.3 V12.9 M3.3 12.9 V11.6 Q3.3 9.7 5.2 9.7 H19.8 Q21.7 9.7 21.7 11.6 V12.9"/></g></svg>
<span id="t70" class="t" style="top:1121.00px;font-size:29px;line-height:29px;color:#0f72d8;font-weight:400;letter-spacing:-0.311px;left:375.5px;">172.32.5.0/24</span>
<div style="left:1276px;top:1113.5px;width:294px;height:40px;border:2px solid #dcdcdc;background:#fff;"></div>
<div style="left:1280px;top:1117.5px;width:2.2px;height:31.5px;background:#5cc51c;"></div>
<span id="t71" class="t" style="top:1122.00px;font-size:24px;line-height:24px;color:#333;font-weight:400;letter-spacing:0.000px;left:1406.8px;">1</span>
<span id="t72" class="t" style="top:1122.00px;font-size:24px;line-height:24px;color:#333;font-weight:400;letter-spacing:0.000px;left:1424.8px;transform:scaleX(0.87);transform-origin:left;">%</span>
<div style="left:1598px;top:1111px;width:132.5px;height:45.5px;border:2px solid #dcdcdc;border-radius:7px;background:#fff;"></div>
<div style="left:1612px;top:1121.5px;width:28px;height:28px;background:#245a8d;border-radius:50%;"></div>
<span id="t73" class="t" style="top:1121.00px;font-size:29px;line-height:29px;color:#333;font-weight:400;letter-spacing:0.071px;left:1650px;">IPAM</span>
<span id="t74" class="t" style="top:1122.00px;font-size:28px;line-height:28px;color:#333;font-weight:400;letter-spacing:-0.566px;left:2452.5px;">Unassigned</span>
<div style="left:191px;top:1268px;width:2558px;height:2px;background:#dcdcdc;"></div>
<div style="left:221px;top:1208.5px;width:32px;height:32px;border:2px solid #8fc4f5;border-radius:5px;background:#fff;"></div>
<div style="left:273.5px;top:1214.1px;width:23.5px;height:2.4px;background:#dadada;border-radius:1.2px;"></div>
<div style="left:273.5px;top:1222.8px;width:23.5px;height:2.4px;background:#dadada;border-radius:1.2px;"></div>
<div style="left:273.5px;top:1231.5px;width:23.5px;height:2.4px;background:#dadada;border-radius:1.2px;"></div>
<svg style="left:338.9px;top:1216.2px;" width="25" height="19.6" viewBox="0 0 25 19.6"><g fill="none" stroke="#607d8b" stroke-width="2.3" stroke-linejoin="round"><rect x="10.45" y="1.15" width="4.1" height="4.0" rx="1.3"/><rect x="1.15" y="14.1" width="4.3" height="4.3" rx="1.4"/><rect x="10.35" y="14.1" width="4.3" height="4.3" rx="1.4"/><rect x="19.55" y="14.1" width="4.3" height="4.3" rx="1.4"/><path d="M12.5 6.3 V12.9 M3.3 12.9 V11.6 Q3.3 9.7 5.2 9.7 H19.8 Q21.7 9.7 21.7 11.6 V12.9"/></g></svg>
<span id="t75" class="t" style="top:1211.00px;font-size:29px;line-height:29px;color:#0f72d8;font-weight:400;letter-spacing:-0.311px;left:375.5px;">172.32.6.0/24</span>
<div style="left:1276px;top:1203.5px;width:294px;height:40px;border:2px solid #dcdcdc;background:#fff;"></div>
<div style="left:1280px;top:1207.5px;width:2.2px;height:31.5px;background:#5cc51c;"></div>
<span id="t76" class="t" style="top:1212.00px;font-size:24px;line-height:24px;color:#333;font-weight:400;letter-spacing:0.000px;left:1406.8px;">1</span>
<span id="t77" class="t" style="top:1212.00px;font-size:24px;line-height:24px;color:#333;font-weight:400;letter-spacing:0.000px;left:1424.8px;transform:scaleX(0.87);transform-origin:left;">%</span>
<div style="left:1598px;top:1201px;width:132.5px;height:45.5px;border:2px solid #dcdcdc;border-radius:7px;background:#fff;"></div>
<div style="left:1612px;top:1211.5px;width:28px;height:28px;background:#245a8d;border-radius:50%;"></div>
<span id="t78" class="t" style="top:1211.00px;font-size:29px;line-height:29px;color:#333;font-weight:400;letter-spacing:0.071px;left:1650px;">IPAM</span>
<span id="t79" class="t" style="top:1212.00px;font-size:28px;line-height:28px;color:#333;font-weight:400;letter-spacing:-0.566px;left:2452.5px;">Unassigned</span>
<div style="left:191px;top:1358px;width:2558px;height:2px;background:#dcdcdc;"></div>
<div style="left:221px;top:1298.5px;width:32px;height:32px;border:2px solid #8fc4f5;border-radius:5px;background:#fff;"></div>
<div style="left:273.5px;top:1304.1px;width:23.5px;height:2.4px;background:#dadada;border-radius:1.2px;"></div>
<div style="left:273.5px;top:1312.8px;width:23.5px;height:2.4px;background:#dadada;border-radius:1.2px;"></div>
<div style="left:273.5px;top:1321.5px;width:23.5px;height:2.4px;background:#dadada;border-radius:1.2px;"></div>
<svg style="left:338.9px;top:1306.2px;" width="25" height="19.6" viewBox="0 0 25 19.6"><g fill="none" stroke="#607d8b" stroke-width="2.3" stroke-linejoin="round"><rect x="10.45" y="1.15" width="4.1" height="4.0" rx="1.3"/><rect x="1.15" y="14.1" width="4.3" height="4.3" rx="1.4"/><rect x="10.35" y="14.1" width="4.3" height="4.3" rx="1.4"/><rect x="19.55" y="14.1" width="4.3" height="4.3" rx="1.4"/><path d="M12.5 6.3 V12.9 M3.3 12.9 V11.6 Q3.3 9.7 5.2 9.7 H19.8 Q21.7 9.7 21.7 11.6 V12.9"/></g></svg>
<span id="t80" class="t" style="top:1301.00px;font-size:29px;line-height:29px;color:#0f72d8;font-weight:400;letter-spacing:-0.311px;left:375.5px;">172.32.7.0/24</span>
<div style="left:1276px;top:1293.5px;width:294px;height:40px;border:2px solid #dcdcdc;background:#fff;"></div>
<div style="left:1280px;top:1297.5px;width:2.2px;height:31.5px;background:#5cc51c;"></div>
<span id="t81" class="t" style="top:1302.00px;font-size:24px;line-height:24px;color:#333;font-weight:400;letter-spacing:0.000px;left:1406.8px;">1</span>
<span id="t82" class="t" style="top:1302.00px;font-size:24px;line-height:24px;color:#333;font-weight:400;letter-spacing:0.000px;left:1424.8px;transform:scaleX(0.87);transform-origin:left;">%</span>
<div style="left:1598px;top:1291px;width:132.5px;height:45.5px;border:2px solid #dcdcdc;border-radius:7px;background:#fff;"></div>
<div style="left:1612px;top:1301.5px;width:28px;height:28px;background:#245a8d;border-radius:50%;"></div>
<span id="t83" class="t" style="top:1301.00px;font-size:29px;line-height:29px;color:#333;font-weight:400;letter-spacing:0.071px;left:1650px;">IPAM</span>
<span id="t84" class="t" style="top:1302.00px;font-size:28px;line-height:28px;color:#333;font-weight:400;letter-spacing:-0.566px;left:2452.5px;">Unassigned</span>
<div style="left:191px;top:1448px;width:2558px;height:2px;background:#dcdcdc;"></div>
<div style="left:221px;top:1388.5px;width:32px;height:32px;border:2px solid #8fc4f5;border-radius:5px;background:#fff;"></div>
<div style="left:273.5px;top:1394.1px;width:23.5px;height:2.4px;background:#dadada;border-radius:1.2px;"></div>
<div style="left:273.5px;top:1402.8px;width:23.5px;height:2.4px;background:#dadada;border-radius:1.2px;"></div>
<div style="left:273.5px;top:1411.5px;width:23.5px;height:2.4px;background:#dadada;border-radius:1.2px;"></div>
<svg style="left:338.9px;top:1396.2px;" width="25" height="19.6" viewBox="0 0 25 19.6"><g fill="none" stroke="#607d8b" stroke-width="2.3" stroke-linejoin="round"><rect x="10.45" y="1.15" width="4.1" height="4.0" rx="1.3"/><rect x="1.15" y="14.1" width="4.3" height="4.3" rx="1.4"/><rect x="10.35" y="14.1" width="4.3" height="4.3" rx="1.4"/><rect x="19.55" y="14.1" width="4.3" height="4.3" rx="1.4"/><path d="M12.5 6.3 V12.9 M3.3 12.9 V11.6 Q3.3 9.7 5.2 9.7 H19.8 Q21.7 9.7 21.7 11.6 V12.9"/></g></svg>
<span id="t85" class="t" style="top:1391.00px;font-size:29px;line-height:29px;color:#0f72d8;font-weight:400;letter-spacing:-0.311px;left:375.5px;">172.32.8.0/24</span>
<div style="left:1276px;top:1383.5px;width:294px;height:40px;border:2px solid #dcdcdc;background:#fff;"></div>
<div style="left:1280px;top:1387.5px;width:2.2px;height:31.5px;background:#5cc51c;"></div>
<span id="t86" class="t" style="top:1392.00px;font-size:24px;line-height:24px;color:#333;font-weight:400;letter-spacing:0.000px;left:1406.8px;">1</span>
<span id="t87" class="t" style="top:1392.00px;font-size:24px;line-height:24px;color:#333;font-weight:400;letter-spacing:0.000px;left:1424.8px;transform:scaleX(0.87);transform-origin:left;">%</span>
<div style="left:1598px;top:1381px;width:132.5px;height:45.5px;border:2px solid #dcdcdc;border-radius:7px;background:#fff;"></div>
<div style="left:1612px;top:1391.5px;width:28px;height:28px;background:#245a8d;border-radius:50%;"></div>
<span id="t88" class="t" style="top:1391.00px;font-size:29px;line-height:29px;color:#333;font-weight:400;letter-spacing:0.071px;left:1650px;">IPAM</span>
<span id="t89" class="t" style="top:1392.00px;font-size:28px;line-height:28px;color:#333;font-weight:400;letter-spacing:-0.566px;left:2452.5px;">Unassigned</span>
<div style="left:191px;top:1538px;width:2558px;height:2px;background:#dcdcdc;"></div>
<div style="left:221px;top:1478.5px;width:32px;height:32px;border:2px solid #8fc4f5;border-radius:5px;background:#fff;"></div>
<div style="left:273.5px;top:1484.1px;width:23.5px;height:2.4px;background:#dadada;border-radius:1.2px;"></div>
<div style="left:273.5px;top:1492.8px;width:23.5px;height:2.4px;background:#dadada;border-radius:1.2px;"></div>
<div style="left:273.5px;top:1501.5px;width:23.5px;height:2.4px;background:#dadada;border-radius:1.2px;"></div>
<svg style="left:338.9px;top:1486.2px;" width="25" height="19.6" viewBox="0 0 25 19.6"><g fill="none" stroke="#607d8b" stroke-width="2.3" stroke-linejoin="round"><rect x="10.45" y="1.15" width="4.1" height="4.0" rx="1.3"/><rect x="1.15" y="14.1" width="4.3" height="4.3" rx="1.4"/><rect x="10.35" y="14.1" width="4.3" height="4.3" rx="1.4"/><rect x="19.55" y="14.1" width="4.3" height="4.3" rx="1.4"/><path d="M12.5 6.3 V12.9 M3.3 12.9 V11.6 Q3.3 9.7 5.2 9.7 H19.8 Q21.7 9.7 21.7 11.6 V12.9"/></g></svg>
<span id="t90" class="t" style="top:1481.00px;font-size:29px;line-height:29px;color:#0f72d8;font-weight:400;letter-spacing:-0.311px;left:375.5px;">172.32.9.0/24</span>
<div style="left:1276px;top:1473.5px;width:294px;height:40px;border:2px solid #dcdcdc;background:#fff;"></div>
<div style="left:1280px;top:1477.5px;width:2.2px;height:31.5px;background:#5cc51c;"></div>
<span id="t91" class="t" style="top:1482.00px;font-size:24px;line-height:24px;color:#333;font-weight:400;letter-spacing:0.000px;left:1406.8px;">1</span>
<span id="t92" class="t" style="top:1482.00px;font-size:24px;line-height:24px;color:#333;font-weight:400;letter-spacing:0.000px;left:1424.8px;transform:scaleX(0.87);transform-origin:left;">%</span>
<div style="left:1598px;top:1471px;width:132.5px;height:45.5px;border:2px solid #dcdcdc;border-radius:7px;background:#fff;"></div>
<div style="left:1612px;top:1481.5px;width:28px;height:28px;background:#245a8d;border-radius:50%;"></div>
<span id="t93" class="t" style="top:1481.00px;font-size:29px;line-height:29px;color:#333;font-weight:400;letter-spacing:0.071px;left:1650px;">IPAM</span>
<span id="t94" class="t" style="top:1482.00px;font-size:28px;line-height:28px;color:#333;font-weight:400;letter-spacing:-0.566px;left:2452.5px;">Unassigned</span>
<div style="left:221px;top:1568.5px;width:32px;height:32px;border:2px solid #8fc4f5;border-radius:5px;background:#fff;"></div>
<div style="left:273.5px;top:1574.1px;width:23.5px;height:2.4px;background:#dadada;border-radius:1.2px;"></div>
<div style="left:273.5px;top:1582.8px;width:23.5px;height:2.4px;background:#dadada;border-radius:1.2px;"></div>
<div style="left:273.5px;top:1591.5px;width:23.5px;height:2.4px;background:#dadada;border-radius:1.2px;"></div>
<svg style="left:338.9px;top:1576.2px;" width="25" height="19.6" viewBox="0 0 25 19.6"><g fill="none" stroke="#607d8b" stroke-width="2.3" stroke-linejoin="round"><rect x="10.45" y="1.15" width="4.1" height="4.0" rx="1.3"/><rect x="1.15" y="14.1" width="4.3" height="4.3" rx="1.4"/><rect x="10.35" y="14.1" width="4.3" height="4.3" rx="1.4"/><rect x="19.55" y="14.1" width="4.3" height="4.3" rx="1.4"/><path d="M12.5 6.3 V12.9 M3.3 12.9 V11.6 Q3.3 9.7 5.2 9.7 H19.8 Q21.7 9.7 21.7 11.6 V12.9"/></g></svg>
<span id="t95" class="t" style="top:1571.00px;font-size:29px;line-height:29px;color:#0f72d8;font-weight:400;letter-spacing:-0.297px;left:375.5px;">172.32.10.0/24</span>
<div style="left:1276px;top:1563.5px;width:294px;height:40px;border:2px solid #dcdcdc;background:#fff;"></div>
<div style="left:1280px;top:1567.5px;width:2.2px;height:31.5px;background:#5cc51c;"></div>
<span id="t96" class="t" style="top:1572.00px;font-size:24px;line-height:24px;color:#333;font-weight:400;letter-spacing:0.000px;left:1406.8px;">1</span>
<span id="t97" class="t" style="top:1572.00px;font-size:24px;line-height:24px;color:#333;font-weight:400;letter-spacing:0.000px;left:1424.8px;transform:scaleX(0.87);transform-origin:left;">%</span>
<div style="left:1598px;top:1561px;width:132.5px;height:45.5px;border:2px solid #dcdcdc;border-radius:7px;background:#fff;"></div>
<div style="left:1612px;top:1571.5px;width:28px;height:28px;background:#245a8d;border-radius:50%;"></div>
<span id="t98" class="t" style="top:1571.00px;font-size:29px;line-height:29px;color:#333;font-weight:400;letter-spacing:0.071px;left:1650px;">IPAM</span>
<span id="t99" class="t" style="top:1572.00px;font-size:28px;line-height:28px;color:#333;font-weight:400;letter-spacing:-0.566px;left:2452.5px;">Unassigned</span>
<div style="left:144px;top:1594px;width:2650px;height:46px;background:#fafafa;"></div>
<div style="left:144px;top:1640px;width:3310px;height:38px;background:linear-gradient(#fafafa,#eeeeee);"></div>
<div style="left:189px;top:1592.5px;width:2592px;height:2px;background:#dcdcdc;"></div>
<div style="left:2759px;top:640px;width:20px;height:952px;background:#fafafa;border:2px solid #e2e2e2;border-radius:10px;"></div>
<div style="left:2759px;top:640px;width:20px;height:459px;background:#9f9f9f;border-radius:10px;"></div>
<div style="left:152px;top:1595px;width:350px;height:71px;border:10px solid #62c146;background:linear-gradient(#fff,#f9f9f9);"></div>
<span id="t100" class="t" style="top:1615.00px;font-size:22px;line-height:22px;color:#2b2b2b;font-weight:400;letter-spacing:-0.053px;left:189px;">Displaying</span>
<span id="t101" class="t" style="top:1615.00px;font-size:22px;line-height:22px;color:#2b2b2b;font-weight:700;letter-spacing:-0.451px;left:299px;">11 of 22 entries</span>
<div style="left:2811px;top:466px;width:580px;height:1186px;border-left:2px solid #dcdcdc;border-top:2px solid #dcdcdc;border-right:2px solid #dcdcdc;background:#fafafa;"></div>
<svg style="left:2834.8px;top:500.3px;" width="25" height="19.6" viewBox="0 0 25 19.6"><g fill="none" stroke="#5f8595" stroke-width="2.0" stroke-linejoin="round"><rect x="10.45" y="1.15" width="4.1" height="4.0" rx="1.3"/><rect x="1.15" y="14.1" width="4.3" height="4.3" rx="1.4"/><rect x="10.35" y="14.1" width="4.3" height="4.3" rx="1.4"/><rect x="19.55" y="14.1" width="4.3" height="4.3" rx="1.4"/><path d="M12.5 6.3 V12.9 M3.3 12.9 V11.6 Q3.3 9.7 5.2 9.7 H19.8 Q21.7 9.7 21.7 11.6 V12.9"/></g></svg>
<span id="t102" class="t" style="top:492.00px;font-size:31px;line-height:31px;color:#333;font-weight:700;letter-spacing:-0.210px;left:2872px;">172.32.0.0/24</span>
<span id="t103" class="t" style="top:538.00px;font-size:24px;line-height:24px;color:#333;font-weight:400;letter-spacing:-0.406px;left:2833px;">IPv4 Subnet</span>
<div style="left:2833px;top:574px;width:536px;height:2px;background:#e9e9e9;"></div>
<svg style="left:2907.4px;top:615.8px;" width="388" height="388" viewBox="-194 -194 388 388"><circle r="191.8" fill="#fff"/><circle r="187.7" fill="#f1f1f1"/><circle r="152" fill="#fff"/><path d="M-30.88 -187.98 A190.5 190.5 0 0 1 1.30 -190.50 L1.30 -149.49 A149.5 149.5 0 0 0 -24.24 -147.52 Z" fill="#fff"/><path d="M-26.47 -186.43 A188.3 188.3 0 0 1 -2.40 -188.28 L-2.40 -150.88 A150.9 150.9 0 0 0 -21.21 -149.40 Z" fill="#245a8d"/><circle r="148" fill="#5cc51c"/></svg>
<span id="t104" class="t" style="top:769.00px;font-size:48px;line-height:48px;color:#fff;font-weight:400;letter-spacing:0.000px;left:3101.40px;transform:translateX(-50%);transform:translateX(-50%) scaleX(0.885);">3%</span>
<span id="t105" class="t" style="top:815.00px;font-size:28px;line-height:28px;color:#fff;font-weight:400;letter-spacing:0.246px;left:3101.52px;transform:translateX(-50%);">IPv4 Utilization</span>
<span id="t106" class="t" style="top:1037.00px;font-size:29px;line-height:29px;color:#b8185e;font-weight:400;letter-spacing:0.000px;-webkit-text-stroke:0.5px #b8185e;left:3101.00px;transform:translateX(-50%);">8</span>
<span id="t107" class="t" style="top:1072.00px;font-size:27.5px;line-height:27.5px;color:#333;font-weight:700;letter-spacing:-0.684px;left:3102.66px;transform:translateX(-50%);">Active IPv4 Addresses</span>
<span id="t108" class="t" style="top:1116.00px;font-size:20px;line-height:20px;color:#1f5a96;font-weight:700;letter-spacing:-0.554px;left:3100.72px;transform:translateX(-50%);">6 Static</span>
<span id="t109" class="t" style="top:1181.00px;font-size:29px;line-height:29px;color:#b8185e;font-weight:400;letter-spacing:-0.156px;-webkit-text-stroke:0.5px #b8185e;left:3100.92px;transform:translateX(-50%);">256</span>
<span id="t110" class="t" style="top:1215.00px;font-size:27.5px;line-height:27.5px;color:#333;font-weight:700;letter-spacing:-0.698px;left:3102.65px;transform:translateX(-50%);">Total IPv4 Addresses</span>
<div style="left:2833px;top:1275px;width:536px;height:3.5px;background:#ededed;"></div>
<span id="t111" class="t" style="top:1326.00px;font-size:24px;line-height:24px;color:#333;font-weight:400;letter-spacing:0.234px;left:2843px;">Description</span>
<div style="left:2833px;top:1365px;width:536px;height:44px;background:#f0f0f0;"></div>
<span id="t112" class="t" style="top:1376.00px;font-size:24px;line-height:24px;color:#333;font-weight:400;letter-spacing:-0.582px;left:2843px;">Access View</span>
<span id="t113" class="t" style="top:1376.00px;font-size:24px;line-height:24px;color:#333;font-weight:700;letter-spacing:-1.319px;right:96.32px;">Unassigned</span>
<div style="left:2833px;top:1409px;width:536px;height:44px;background:#fff;"></div>
<span id="t114" class="t" style="top:1420.00px;font-size:24px;line-height:24px;color:#333;font-weight:400;letter-spacing:-1.134px;left:2843px;">IP Space:</span>
<span id="t115" class="t" style="top:1420.00px;font-size:24px;line-height:24px;color:#333;font-weight:700;letter-spacing:-1.077px;right:96.08px;">Nimbus Aveonics</span>
<div style="left:2833px;top:1453px;width:536px;height:44px;background:#f0f0f0;"></div>
<span id="t116" class="t" style="top:1464.00px;font-size:24px;line-height:24px;color:#333;font-weight:400;letter-spacing:-0.708px;left:2843px;">Name:</span>
<div style="left:2833px;top:1497px;width:536px;height:44px;background:#fff;"></div>
<span id="t117" class="t" style="top:1508.00px;font-size:24px;line-height:24px;color:#333;font-weight:400;letter-spacing:-0.430px;left:2843px;">Service Instance:</span>
<div style="left:2833px;top:1541px;width:536px;height:44px;background:#f0f0f0;"></div>
<span id="t118" class="t" style="top:1552.00px;font-size:24px;line-height:24px;color:#333;font-weight:400;letter-spacing:-1.629px;left:2843px;">Tags</span>
<span id="t119" class="t" style="top:1551.00px;font-size:25px;line-height:25px;color:#0f72d8;font-weight:400;letter-spacing:0.000px;-webkit-text-stroke:0.5px #0f72d8;right:95.00px;">0</span>
<div style="left:2833px;top:1585px;width:536px;height:44px;background:#fff;"></div>
<span id="t120" class="t" style="top:1596.00px;font-size:24px;line-height:24px;color:#333;font-weight:400;letter-spacing:0.255px;left:2843px;">Filters</span>
<span id="t121" class="t" style="top:1595.00px;font-size:25px;line-height:25px;color:#0f72d8;font-weight:400;letter-spacing:0.000px;-webkit-text-stroke:0.5px #0f72d8;right:95.00px;">0</span>
<div style="left:2833px;top:1629px;width:536px;height:44px;background:#f0f0f0;"></div>
<span id="t122" class="t" style="top:1640.00px;font-size:24px;line-height:24px;color:#333;font-weight:400;letter-spacing:-0.750px;left:2843px;">Usage</span>
<span id="t123" class="t" style="top:1640.00px;font-size:24px;line-height:24px;color:#333;font-weight:700;letter-spacing:0.509px;right:94.49px;">IPAM</span>
<div style="left:2800px;top:1652px;width:654px;height:26px;background:linear-gradient(#f6f6f6,#eeeeee);"></div>
<div style="left:3391px;top:466px;width:20px;height:1185px;background:#fafafa;border:2px solid #dedede;border-radius:10px;"></div>
<div style="left:3391px;top:466px;width:20px;height:923px;background:#9f9f9f;border-radius:10px;"></div>
<div style="left:144px;top:106px;width:22px;height:1572px;background:linear-gradient(90deg,rgba(0,0,0,0.095),rgba(0,0,0,0.035) 40%,rgba(0,0,0,0));"></div>
</body></html>
